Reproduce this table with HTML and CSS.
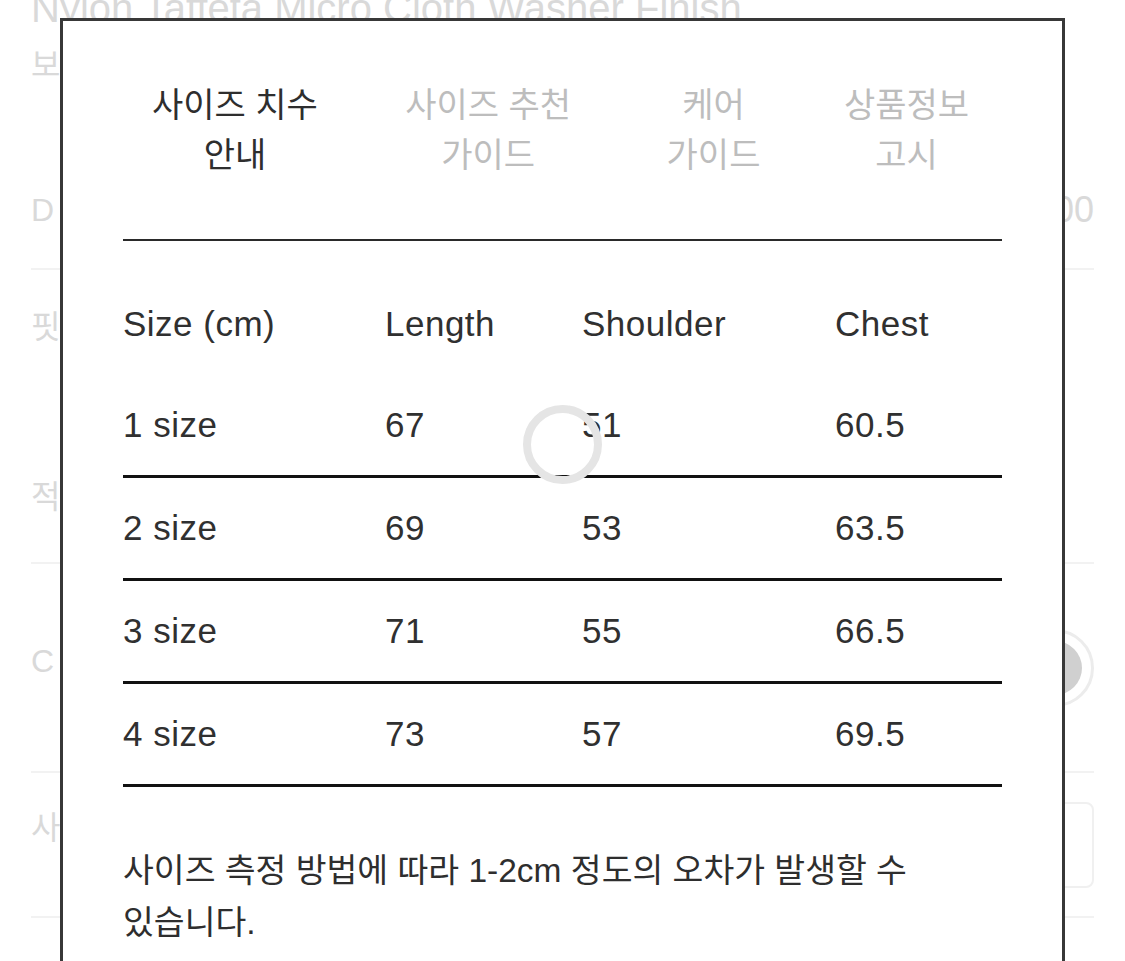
FILE: index.html
```html
<!DOCTYPE html>
<html lang="ko">
<head>
<meta charset="utf-8">
<title>Size guide</title>
<link rel="stylesheet" href="styles.css">
</head>
<body>
<div class="page">
  <div class="title">Nylon Taffeta Micro Cloth Washer Finish</div>
  <div class="row r-sub"><span>보</span></div>
  <div class="row r-price"><span>D</span><span class="right">00</span></div>
  <div class="row r-fit"><span>핏</span></div>
  <div class="row r-app"><span>적</span></div>
  <div class="row r-color"><span class="lbl">C</span><span class="swatch"><span class="dot"></span></span></div>
  <div class="row r-size"><span class="lbl">사</span><span class="box"></span></div>
</div>

<div class="modal">
  <div class="tabs">
    <div class="tab active">사이즈 치수<br>안내</div>
    <div class="tab t2">사이즈 추천<br>가이드</div>
    <div class="tab t3">케어<br>가이드</div>
    <div class="tab">상품정보<br>고시</div>
  </div>

  <table class="sizes">
    <colgroup>
      <col class="c1"><col class="c2"><col class="c3"><col class="c4">
    </colgroup>
    <thead>
      <tr class="head"><th>Size (cm)</th><th>Length</th><th>Shoulder</th><th>Chest</th></tr>
    </thead>
    <tbody>
      <tr><td>1 size</td><td>67</td><td>51</td><td>60.5</td></tr>
      <tr><td>2 size</td><td>69</td><td>53</td><td>63.5</td></tr>
      <tr><td>3 size</td><td>71</td><td>55</td><td>66.5</td></tr>
      <tr class="last"><td>4 size</td><td>73</td><td>57</td><td>69.5</td></tr>
    </tbody>
  </table>

  <p class="note">사이즈 측정 방법에 따라 1-2cm 정도의 오차가 발생할 수 있습니다.</p>
</div>

<div class="spinner"></div>
</body>
</html>
```

FILE: styles.css
```css
html, body {
  margin: 0;
  padding: 0;
  background: #fff;
  overflow: hidden;
  height: 961px;
}

body {
  font-family: "Liberation Sans", "Noto Sans CJK KR", sans-serif;
  color: #333;
}

/* faded background page */
.page {
  padding: 0 31px;
  color: #d9d9d9;
}

.title {
  font-size: 40px;
  line-height: 40px;
  margin-top: -12px;
  white-space: nowrap;
}

.row {
  display: flex;
  justify-content: space-between;
  align-items: flex-start;
  font-size: 32px;
  line-height: 40px;
  box-sizing: border-box;
}

.r-sub {
  height: 122px;
  padding-top: 17px;
}

.r-price {
  height: 120px;
  padding-top: 40px;
  border-bottom: 2px solid #f2f2f2;
}

.r-price .right {
  font-size: 36px;
}

.r-fit {
  height: 140px;
  padding-top: 37px;
}

.r-app {
  height: 154px;
  padding-top: 67px;
  border-bottom: 2px solid #f2f2f2;
}

.r-color {
  height: 209px;
  align-items: center;
  border-bottom: 2px solid #f2f2f2;
}

.r-color .lbl {
  margin-bottom: 14px;
}

.r-color .swatch {
  width: 72px;
  height: 72px;
  border: 3px solid #ececec;
  border-radius: 50%;
  display: flex;
  align-items: center;
  justify-content: center;
}

.r-color .dot {
  width: 54px;
  height: 54px;
  border-radius: 50%;
  background: #d0d0d0;
}

.r-size {
  height: 145px;
  align-items: center;
  border-bottom: 2px solid #f2f2f2;
}

.r-size .lbl {
  margin-bottom: 34px;
}

.r-size .box {
  width: 60px;
  height: 82px;
  border: 2px solid #f0f0f0;
  border-radius: 8px;
}

/* modal */
.modal {
  position: fixed;
  left: 60px;
  top: 18px;
  width: 1005px;
  height: 1000px;
  box-sizing: border-box;
  background: #fff;
  border: 3px solid #383838;
  padding: 0 60px;
}

.tabs {
  display: flex;
  justify-content: space-between;
  padding: 59px 33px 59px 29px;
  border-bottom: 2px solid #2a2a2a;
}

.tab {
  font-size: 34px;
  line-height: 50px;
  text-align: center;
  color: #bdbdbd;
}

.tab.t2 {
  margin-left: 4px;
}

.tab.t3 {
  margin-left: 12px;
}

.tab.active {
  color: #2e2e2e;
}

.sizes {
  width: 100%;
  border-collapse: collapse;
  margin-top: 31px;
  table-layout: fixed;
}

.c1 { width: 262px; }
.c2 { width: 197px; }
.c3 { width: 253px; }
.c4 { width: 167px; }

.sizes th,
.sizes td {
  padding: 0;
  text-align: left;
  font-weight: normal;
  font-size: 35px;
  letter-spacing: 0.5px;
  color: #303030;
  height: 100px;
  vertical-align: middle;
}

.sizes .head th {
  height: 103px;
}

.sizes tbody tr {
  border-bottom: 3px solid #111;
}

.note {
  margin: 58px 0 0;
  max-width: 800px;
  font-size: 33.5px;
  line-height: 52px;
  color: #2e2e2e;
}

/* loading ring over the modal */
.spinner {
  position: fixed;
  left: 523px;
  top: 405px;
  width: 63px;
  height: 63px;
  border: 8px solid #e5e5e5;
  border-radius: 50%;
}
```
